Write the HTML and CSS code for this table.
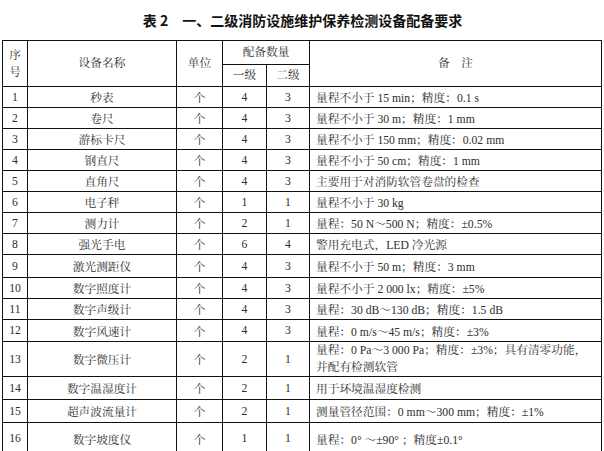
FILE: index.html
```html
<!DOCTYPE html>
<html lang="zh-CN">
<head>
<meta charset="utf-8">
<title>表 2 一、二级消防设施维护保养检测设备配备要求</title>
<link rel="stylesheet" href="styles.css">
</head>
<body>
<div class="page">
  <h1 class="title">表 2　一、二级消防设施维护保养检测设备配备要求</h1>
  <table class="equip">
    <colgroup>
      <col class="c-no">
      <col class="c-name">
      <col class="c-unit">
      <col class="c-l1">
      <col class="c-l2">
      <col class="c-note">
    </colgroup>
    <thead>
      <tr class="h1">
        <th rowspan="2">序<br>号</th>
        <th rowspan="2">设备名称</th>
        <th rowspan="2">单位</th>
        <th colspan="2">配备数量</th>
        <th rowspan="2">备　注</th>
      </tr>
      <tr class="h2">
        <th>一级</th>
        <th>二级</th>
      </tr>
    </thead>
    <tbody>
      <tr class="r21"><td>1</td><td>秒表</td><td>个</td><td>4</td><td>3</td><td class="note">量程不小于 15 min；精度：0.1 s</td></tr>
      <tr class="r21"><td>2</td><td>卷尺</td><td>个</td><td>4</td><td>3</td><td class="note">量程不小于 30 m；精度：1 mm</td></tr>
      <tr class="r21"><td>3</td><td>游标卡尺</td><td>个</td><td>4</td><td>3</td><td class="note">量程不小于 150 mm；精度：0.02 mm</td></tr>
      <tr class="r21"><td>4</td><td>钢直尺</td><td>个</td><td>4</td><td>3</td><td class="note">量程不小于 50 cm；精度：1 mm</td></tr>
      <tr class="r21"><td>5</td><td>直角尺</td><td>个</td><td>4</td><td>3</td><td class="note">主要用于对消防软管卷盘的检查</td></tr>
      <tr class="r21"><td>6</td><td>电子秤</td><td>个</td><td>1</td><td>1</td><td class="note">量程不小于 30 kg</td></tr>
      <tr class="r21"><td>7</td><td>测力计</td><td>个</td><td>2</td><td>1</td><td class="note">量程：50 N～500 N；精度：±0.5%</td></tr>
      <tr class="r21"><td>8</td><td>强光手电</td><td>个</td><td>6</td><td>4</td><td class="note">警用充电式，LED 冷光源</td></tr>
      <tr class="r23"><td>9</td><td>激光测距仪</td><td>个</td><td>4</td><td>3</td><td class="note">量程不小于 50 m；精度：3 mm</td></tr>
      <tr class="r21"><td>10</td><td>数字照度计</td><td>个</td><td>4</td><td>3</td><td class="note">量程不小于 2 000 lx；精度：±5%</td></tr>
      <tr class="r21"><td>11</td><td>数字声级计</td><td>个</td><td>4</td><td>3</td><td class="note">量程：30 dB～130 dB；精度：1.5 dB</td></tr>
      <tr class="r22"><td>12</td><td>数字风速计</td><td>个</td><td>4</td><td>3</td><td class="note">量程：0 m/s～45 m/s；精度：±3%</td></tr>
      <tr class="r31"><td>13</td><td>数字微压计</td><td>个</td><td>2</td><td>1</td><td class="note two">量程：0 Pa～3 000 Pa；精度：±3%；具有清零功能，<br>并配有检测软管</td></tr>
      <tr class="r23"><td>14</td><td>数字温湿度计</td><td>个</td><td>2</td><td>1</td><td class="note">用于环境温湿度检测</td></tr>
      <tr class="r23"><td>15</td><td>超声波流量计</td><td>个</td><td>2</td><td>1</td><td class="note">测量管径范围：0 mm～300 mm；精度：±1%</td></tr>
      <tr class="r32"><td>16</td><td>数字坡度仪</td><td>个</td><td>1</td><td>1</td><td class="note">量程：0° ～±90° ；精度±0.1°</td></tr>
      <tr class="r31"><td></td><td></td><td></td><td></td><td></td><td class="note"></td></tr>
    </tbody>
  </table>
</div>
</body>
</html>
```

FILE: styles.css
```css
html, body {
  margin: 0;
  padding: 0;
  background: #ffffff;
}

.page {
  width: 604px;
  height: 451px;
  overflow: hidden;
  font-family: "Liberation Serif", "Noto Serif CJK SC", "Noto Sans CJK SC", serif;
  color: #2e2e2e;
}

.title {
  margin: 0;
  height: 40px;
  line-height: 40px;
  text-align: center;
  font-family: "Noto Sans CJK SC", "Noto Sans", sans-serif;
  font-weight: 700;
  font-size: 14px;
  color: #111;
  padding-left: 1px;
}

.equip {
  margin-left: 2px;
  width: 599px;
  table-layout: fixed;
  border-collapse: collapse;
  font-size: 11.7px;
}

.c-no { width: 25px; }
.c-name { width: 149px; }
.c-unit { width: 46px; }
.c-l1 { width: 44px; }
.c-l2 { width: 43px; }
.c-note { width: 292px; }

.equip th,
.equip td {
  border: 1px solid #111;
  padding: 0;
  text-align: center;
  vertical-align: middle;
  font-weight: 400;
  white-space: nowrap;
  overflow: hidden;
}

.equip th {
  line-height: 17px;
}

.h1 th { height: 23px; }
.h2 th { height: 21px; }

.r21 td { height: 20px; }
.r22 td { height: 21px; }
.r23 td { height: 22px; }
.r31 td { height: 30px; }
.r32 td { height: 31px; }

.equip td.note {
  text-align: left;
  padding-left: 6px;
}

.equip td.two {
  line-height: 17px;
}
```
